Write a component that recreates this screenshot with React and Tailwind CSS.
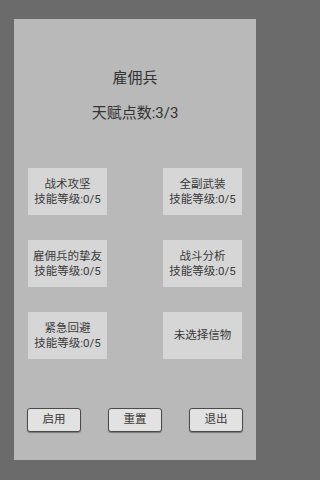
import React from "react";

const font = { fontFamily: 'Roboto, "Noto Sans CJK SC", sans-serif' };

function Card({ lines }) {
  return (
    <div className="h-[47px] bg-[#d6d6d6] flex flex-col items-center justify-center text-[11.5px] leading-[15px] text-[#3a3a3a]">
      {lines.map((l, i) => (
        <div key={i}>{l}</div>
      ))}
    </div>
  );
}

function Btn({ label }) {
  return (
    <button className="w-[54px] h-[24px] rounded-[3px] border border-[#4a4a4a] bg-[#e2e2e2] text-[11.5px] leading-none text-[#3a3a3a] flex items-center justify-center shadow-[0_1px_1px_rgba(0,0,0,0.35)]">
      {label}
    </button>
  );
}

export default function App() {
  return (
    <div className="w-full min-h-[480px] bg-[#6b6b6b] pt-[19px] pb-[20px] px-[14px]" style={font}>
      <div className="w-[242px] h-[441px] bg-[#b9b9b9] flex flex-col items-stretch pt-[49px]">
        <div className="text-center text-[15px] leading-[20px] text-[#333333]">雇佣兵</div>
        <div className="mt-[15px] text-center text-[15px] leading-[20px] text-[#333333]">天赋点数:3/3</div>
        <div className="mt-[45px] px-[14px] grid grid-cols-[79px_79px] justify-between gap-y-[25px]">
          <Card lines={["战术攻坚", "技能等级:0/5"]} />
          <Card lines={["全副武装", "技能等级:0/5"]} />
          <Card lines={["雇佣兵的挚友", "技能等级:0/5"]} />
          <Card lines={["战斗分析", "技能等级:0/5"]} />
          <Card lines={["紧急回避", "技能等级:0/5"]} />
          <Card lines={["未选择信物"]} />
        </div>
        <div className="mt-[49px] px-[13px] flex justify-between">
          <Btn label="启用" />
          <Btn label="重置" />
          <Btn label="退出" />
        </div>
      </div>
    </div>
  );
}
